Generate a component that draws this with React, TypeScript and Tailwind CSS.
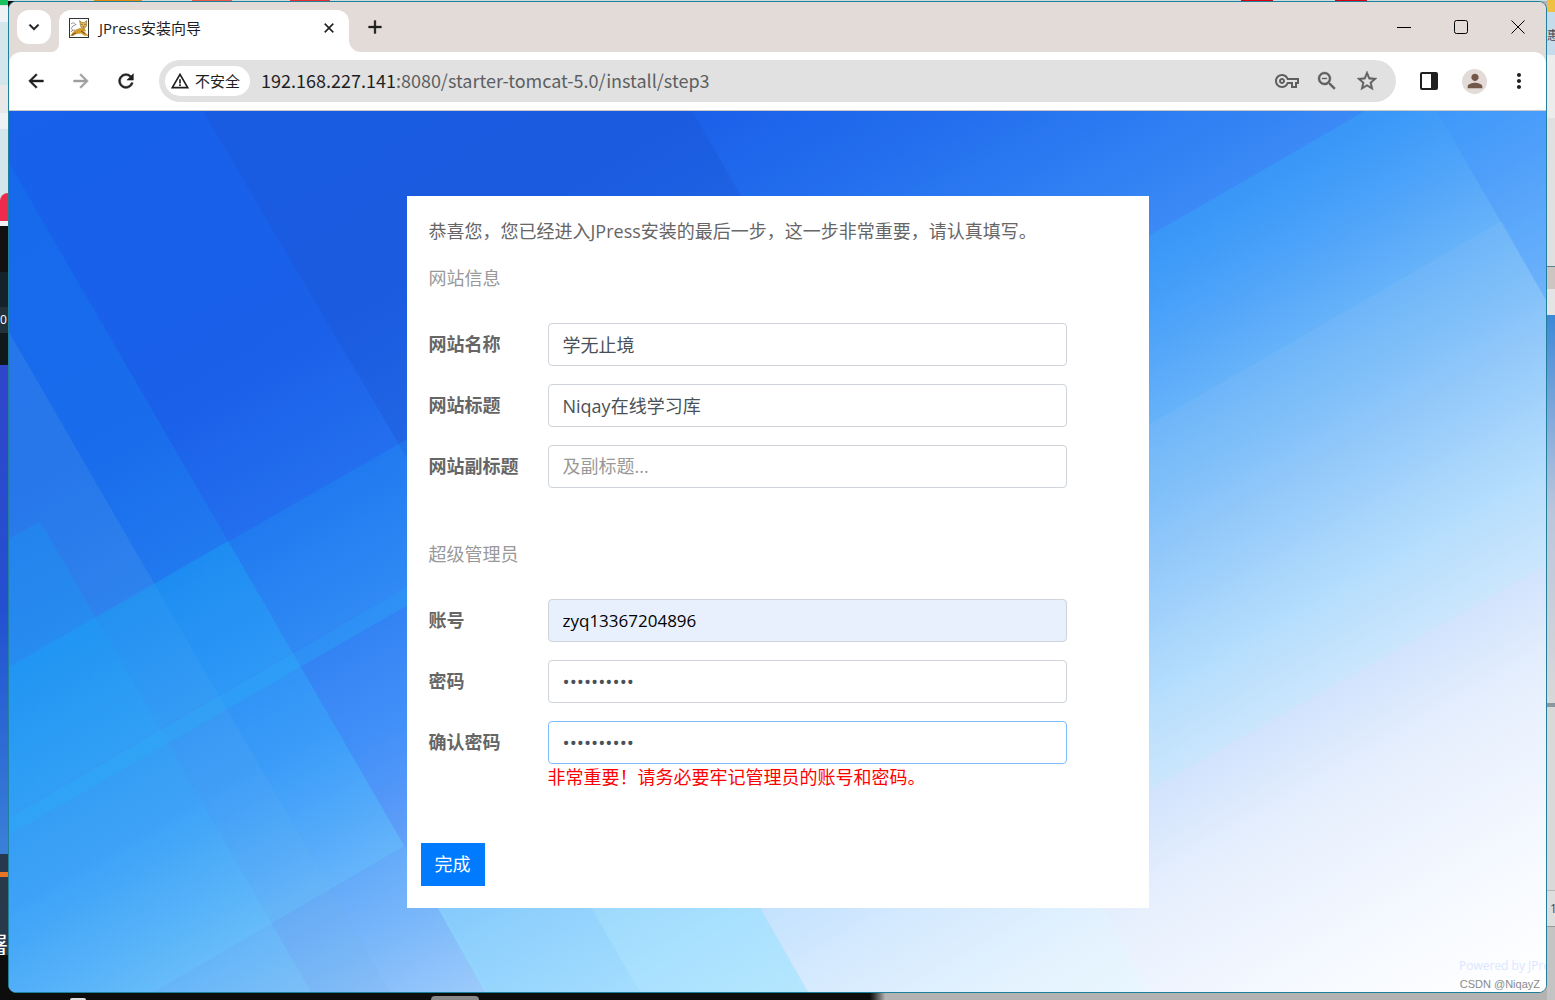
import { useState } from 'react';
import {
  MdAdd,
  MdArrowBack,
  MdArrowForward,
  MdClose,
  MdKeyboardArrowDown,
  MdMoreVert,
  MdOutlineVpnKey,
  MdPerson,
  MdRefresh,
  MdStarBorder,
  MdWarningAmber,
  MdZoomOut,
} from 'react-icons/md';

function TomcatIcon() {
  return (
    <svg viewBox="0 0 20 20" className="size-5 shrink-0" aria-hidden="true">
      <rect x="0.5" y="0.5" width="19" height="19" fill="#fff" stroke="#333" />
      <path d="M1 18l3-4 3-2.500 4-1.500 5 1 1 2-2 .5 4 3.500v1l-4-.5-3-2-5 .5-3 2z" fill="#d39a2c" />
      <path d="M10.500 2.500l2.500 2h2.500l2-2v5.500l-2.500 3-3-1.500z" fill="#e0b850" stroke="#6b5420" strokeWidth=".5" />
      <path d="M6 12c-3 1-4-1-3-3s3-1 4-3M2 6c2-2 4-1 5 1M2 14l2-2" fill="none" stroke="#777" strokeWidth=".8" />
      <path d="M3 17l4-2M12 13l4 2.500M12.500 6.500h1M15.500 6.500h1M13.800 8.800h1.500" stroke="#433" strokeWidth=".8" />
    </svg>
  );
}

function TabStrip() {
  return (
    <div className="flex h-[50px] items-end bg-[#e3dbd8] pl-2">
      <button aria-label="搜索标签页" className="mb-2 flex size-[34px] items-center justify-center rounded-xl bg-white text-[#1f1f1f]">
        <MdKeyboardArrowDown size={20} strokeWidth={0.6} />
      </button>
      <div className="h-3 w-2 bg-white">
        <div className="size-full rounded-br-xl bg-[#e3dbd8]" />
      </div>
      <div className="flex h-[42px] w-[290px] items-center rounded-t-xl bg-white pr-[10px] pb-[6px] pl-[10px]">
        <TomcatIcon />
        <span className="ml-[10px] flex-1 text-[15px] text-[#1f1f1f]">JPress安装向导</span>
        <button aria-label="关闭标签页" className="flex size-5 items-center justify-center text-[#1f1f1f]">
          <MdClose size={16} strokeWidth={0.6} />
        </button>
      </div>
      <div className="h-3 w-3 bg-white">
        <div className="size-full rounded-bl-xl bg-[#e3dbd8]" />
      </div>
      <button aria-label="新标签页" className="mb-[13px] ml-[2px] flex size-6 items-center justify-center text-[#1f1f1f]">
        <MdAdd size={22} strokeWidth={0.4} />
      </button>
      <div className="ml-auto flex h-full text-black">
        <button aria-label="最小化" className="flex w-[57px] items-center justify-center">
          <svg viewBox="0 0 14 14" className="size-[14px]"><path d="M0 7.500h14" stroke="currentColor" /></svg>
        </button>
        <button aria-label="最大化" className="flex w-[57px] items-center justify-center">
          <svg viewBox="0 0 14 14" className="size-[14px]"><rect x=".5" y=".5" width="13" height="13" rx="2" fill="none" stroke="currentColor" /></svg>
        </button>
        <button aria-label="关闭" className="flex w-[57px] items-center justify-center">
          <svg viewBox="0 0 14 14" className="size-[14px]"><path d="M.5.5l13 13M13.500.5l-13 13" stroke="currentColor" /></svg>
        </button>
      </div>
    </div>
  );
}

function Toolbar() {
  return (
    <div className="bg-[#e3dbd8]">
      <div className="flex h-[59px] items-center rounded-t-xl border-b border-[#c9c9c9] bg-white pr-[15px] pl-4 text-[#1f1f1f]">
        <div className="flex w-[134px] gap-[23px]">
          <button aria-label="后退"><MdArrowBack size={22} strokeWidth={0.6} /></button>
          <button aria-label="前进" className="text-[#9e9e9e]"><MdArrowForward size={22} strokeWidth={0.6} /></button>
          <button aria-label="重新加载"><MdRefresh size={22} strokeWidth={0.6} /></button>
        </div>
        <div className="flex h-[42px] flex-1 items-center rounded-full bg-[#e1e1e1] pr-[17px] pl-[6px]">
          <button className="flex h-[30px] w-[85px] items-center gap-[5px] rounded-full bg-white pl-[5px] text-[15px]">
            <MdWarningAmber size={20} />
            不安全
          </button>
          <div
            role="textbox"
            aria-label="地址栏"
            className='ml-[11px] flex-1 pb-[2px] font-["Noto_Sans_CJK_SC",sans-serif] text-[18px] whitespace-nowrap text-[#5c5f62]'
          >
            <span className="text-[#1f1f1f]">192.168.227.141</span>:8080/starter-tomcat-5.0/install/step3
          </div>
          <div className="flex gap-4 text-[#5f5f5f]">
            <button aria-label="密码"><MdOutlineVpnKey size={24} /></button>
            <button aria-label="缩放"><MdZoomOut size={24} strokeWidth={0.4} /></button>
            <button aria-label="收藏"><MdStarBorder size={24} strokeWidth={0.4} /></button>
          </div>
        </div>
        <div className="flex items-center">
          <button aria-label="侧边栏" className="ml-6">
            <svg viewBox="0 0 18 18" className="size-[18px]">
              <rect x="1" y="1" width="16" height="16" rx="1" fill="none" stroke="currentColor" strokeWidth="2" />
              <path d="M11 1h6v16h-6z" fill="currentColor" />
            </svg>
          </button>
          <button aria-label="个人资料" className="ml-6 flex size-[25px] items-center justify-center rounded-full bg-[#e3dbd8] text-[#74574b]">
            <MdPerson size={22} />
          </button>
          <button aria-label="菜单" className="ml-5"><MdMoreVert size={24} /></button>
        </div>
      </div>
    </div>
  );
}

function Backdrop() {
  return (
    <svg viewBox="9 111 1537 881" preserveAspectRatio="none" className="absolute inset-0 size-full" aria-hidden="true">
      <defs>
        <linearGradient id="sky" gradientUnits="userSpaceOnUse" x1="0" y1="0" x2="825" y2="1429">
          <stop offset="0.06" stopColor="#1761eb" />
          <stop offset="0.27" stopColor="#1a60e9" />
          <stop offset="0.35" stopColor="#236eee" />
          <stop offset="0.41" stopColor="#2d7cf2" />
          <stop offset="0.5" stopColor="#4190f8" />
          <stop offset="0.54" stopColor="#5598f8" />
          <stop offset="0.61" stopColor="#7ab0f9" />
          <stop offset="0.64" stopColor="#8ebcfa" />
          <stop offset="0.71" stopColor="#b6d6fd" />
          <stop offset="0.76" stopColor="#d0e2fd" />
          <stop offset="0.82" stopColor="#e6effd" />
          <stop offset="0.9" stopColor="#f4f8ff" />
          <stop offset="0.98" stopColor="#ffffff" />
        </linearGradient>
        <linearGradient id="beam" gradientUnits="userSpaceOnUse" x1="0" y1="0" x2="825" y2="1429">
          <stop offset="0.1" stopColor="#1088f0" />
          <stop offset="0.35" stopColor="#18a0f4" />
          <stop offset="0.48" stopColor="#38acfa" />
          <stop offset="0.57" stopColor="#68ccfc" />
          <stop offset="0.65" stopColor="#90d8fc" />
          <stop offset="0.72" stopColor="#b4eaff" />
          <stop offset="0.78" stopColor="#d0f4ff" />
        </linearGradient>
      </defs>
      <rect x="9" y="111" width="1537" height="881" fill="url(#sky)" />
      <path d="M203 111H692L870 420L420 480z" fill="#1c50c8" fillOpacity=".28" />
      {/* beams on the left */}
      <path d="M9 163L228 541L489 992H9z" fill="url(#beam)" fillOpacity=".22" />
      <path d="M9 332L390 992H9z" fill="#78b4e8" fillOpacity=".16" />
      <path d="M9 539L40 521L311 992H9z" fill="url(#beam)" fillOpacity=".3" />
      <path d="M9 667L228 541L404 846L157 990L150 992H9z" fill="url(#beam)" fillOpacity=".32" />
      <path d="M9 667L420 432V579L9 815z" fill="url(#beam)" fillOpacity=".24" />
      <path d="M9 818L420 579V598L9 835z" fill="#28b4fa" fillOpacity=".3" />
      {/* beams on the right */}
      <path d="M1140 241L1365 111H1437L1546 300V565L1140 795z" fill="url(#beam)" fillOpacity=".38" />
      <path d="M1437 111H1546V300z" fill="#40b0ff" fillOpacity=".3" />
      <path d="M1140 430L1502 221L1546 300V565L1140 795z" fill="#b0d8f4" fillOpacity=".1" />
      {/* beams below the form */}
      <path d="M425 885H747L808 992H485z" fill="#90e4ff" fillOpacity=".5" />
      <path d="M578 885L640 992H808L747 885z" fill="#c8f4ff" fillOpacity=".2" />
      <path d="M747 885H1090L1148 992H808z" fill="#e0faff" fillOpacity=".35" />
    </svg>
  );
}

interface FieldProps {
  id: string;
  label: string;
  value?: string;
  type?: string;
  placeholder?: string;
  tone?: string;
  hint?: string;
}

function Field({
  id,
  label,
  value = '',
  type = 'text',
  placeholder,
  tone = 'border-[#ced4da] bg-white pb-[2px] text-[18px] text-[#495057]',
  hint,
}: FieldProps) {
  const [text, setText] = useState(value);

  return (
    <div className="grid grid-cols-[119px_1fr]">
      <label htmlFor={id} className="text-[18px] leading-[43px] font-bold">
        {label}
      </label>
      <div>
        <input
          id={id}
          type={type}
          value={text}
          placeholder={placeholder}
          onChange={(e) => setText(e.target.value)}
          className={`block h-[43px] w-full rounded border px-[14px] placeholder:text-[#999] focus:outline-none ${tone}`}
        />
        {hint && <p className="leading-[26px] text-[red]">{hint}</p>}
      </div>
    </div>
  );
}

function InstallForm() {
  return (
    <form
      onSubmit={(e) => e.preventDefault()}
      className="relative mx-auto w-full max-w-[742px] bg-white py-[22px] text-[18px] leading-[27px] text-[#666]"
    >
      <div className="pr-[82px] pl-[22px]">
        <p>恭喜您，您已经进入JPress安装的最后一步，这一步非常重要，请认真填写。</p>
        <h2 className="mt-5 text-[#999]">网站信息</h2>
        <div className="mt-[31px] flex flex-col gap-[18px]">
          <Field id="web-name" label="网站名称" value="学无止境" />
          <Field id="web-title" label="网站标题" value="Niqay在线学习库" />
          <Field id="web-subtitle" label="网站副标题" placeholder="及副标题..." />
        </div>
        <h2 className="mt-[53px] text-[#999]">超级管理员</h2>
        <div className="mt-[31px] flex flex-col gap-[18px]">
          <Field id="username" label="账号" value="zyq13367204896" tone="border-[#ced4da] bg-[#e8f0fe] text-[17px] text-black" />
          <Field id="pwd" label="密码" type="password" value="niqay12345" tone="border-[#ced4da] bg-white text-[19px] text-[#495057]" />
          <Field
            id="confirm-pwd"
            label="确认密码"
            type="password"
            value="niqay12345"
            tone="border-[#80bdff] bg-white text-[19px] text-[#495057]"
            hint="非常重要！请务必要牢记管理员的账号和密码。"
          />
        </div>
      </div>
      <button type="submit" className="mt-[53px] ml-[14px] block h-[43px] bg-[#007bff] px-[14px] text-white">
        完成
      </button>
    </form>
  );
}

// slivers of the windows lying behind the browser
function LeftEdge() {
  return (
    <div className="flex flex-col overflow-hidden bg-[#d3e6ec] text-[12px] text-white">
      <div className="h-[5px] bg-[#19c25f]" />
      <div className="mt-[1px] h-4 bg-[#eef2f5]" />
      <div className="mt-[63px] h-[28px] bg-[#e8e8e8]" />
      <div className="h-4 bg-[#eef2f5]" />
      <div className="mt-[64px] h-7 rounded-tl-lg bg-[#ee2b4c]" />
      <div className="h-[5px] bg-[#eef2f5]" />
      <div className="h-[46px] bg-[#111]" />
      <div className="h-[35px] bg-[#14222b]" />
      <div className="h-[26px] bg-[#22323a] leading-[26px]">0</div>
      <div className="h-8 bg-[#10181c]" />
      <div className="h-[489px] bg-linear-to-b from-[#2f45cc] via-[#2350d0] to-[#3a80d8]" />
      <div className="h-[18px] bg-[#26394f]" />
      <div className="h-[5px] bg-[#e87426]" />
      <div className="flex h-[78px] flex-col items-end justify-end bg-[#28394c] text-[24px] leading-[20px]">署</div>
      <div className="flex-1 bg-[#0d0d0d]" />
    </div>
  );
}

function RightEdge() {
  return (
    <div className="flex flex-col overflow-hidden bg-[#c4c4c4] text-[12px] text-[#445]">
      <div className="h-3 bg-[#f0c040]" />
      <div className="h-[43px] bg-[#c6dcec] leading-[48px]">惠</div>
      <div className="h-[63px] bg-[#ececec]" />
      <div className="h-[149px] border-b border-[#5a8590] bg-[#e0e0e0]" />
      <div className="h-[22px] bg-[#cec4c1]" />
      <div className="h-[26px] bg-[#e4e4e4]" />
      <div className="h-[392px] border-b-4 border-[#8a979e] bg-linear-to-b from-[#3a88d8] via-[#b8c6dc] to-[#d8d8d8]" />
      <div className="h-[184px] border-b border-[#b8b8b8] bg-[#d9d9d9]" />
      <div className="h-9 border-b border-[#999] bg-[#dedede] pl-[3px] leading-9">1</div>
      <div className="flex-1 bg-[#c4c4c4]" />
    </div>
  );
}

export default function App() {
  return (
    <div className='grid min-h-screen grid-cols-[8px_1fr_8px] bg-[#b3b3b3] font-["Open_Sans","Noto_Sans_CJK_SC",sans-serif]'>
      <LeftEdge />
      <div className="flex min-w-0 flex-col bg-linear-to-r from-[#0d0d0d] from-56% to-[#b3b3b3] to-57%">
        <div className="flex h-px bg-[#c9dcdf]">
          <div className="ml-[86px] h-px w-12 bg-[#e88a10]" />
          <div className="ml-[50px] h-px w-10 bg-[#e85c4a]" />
          <div className="ml-[58px] h-px w-10 bg-[#e83030]" />
          <div className="ml-auto h-px w-8 bg-[#d80010]" />
          <div className="mr-[180px] ml-[62px] h-px w-8 bg-[#d80010]" />
        </div>
        {/* the icon set ships an empty bounding path, keep it free of the stroke */}
        <div className="flex flex-1 flex-col overflow-hidden rounded-lg border border-[#20809c] bg-[#e3dbd8] [&_button_path[fill=none]]:stroke-none">
          <TabStrip />
          <Toolbar />
          <main className="relative flex-1 overflow-hidden px-4 pt-[85px] pb-[84px]">
            <Backdrop />
            <InstallForm />
            <div className="absolute right-0 bottom-4 w-[87px] overflow-hidden text-[12px] leading-5 whitespace-nowrap text-[#dbe6ff]">
              Powered by JPress
            </div>
            <div className='absolute right-[6px] bottom-0 font-["Liberation_Sans",sans-serif] text-[11px] leading-4 text-[#8a8a8a]'>
              CSDN @NiqayZ
            </div>
          </main>
        </div>
        <div className="flex h-[7px] items-end">
          <div className="ml-[62px] h-[2px] w-4 rounded-t bg-[#ddd]" />
          <div className="ml-[345px] h-1 w-12 rounded-t bg-[#888]" />
        </div>
      </div>
      <RightEdge />
    </div>
  );
}
